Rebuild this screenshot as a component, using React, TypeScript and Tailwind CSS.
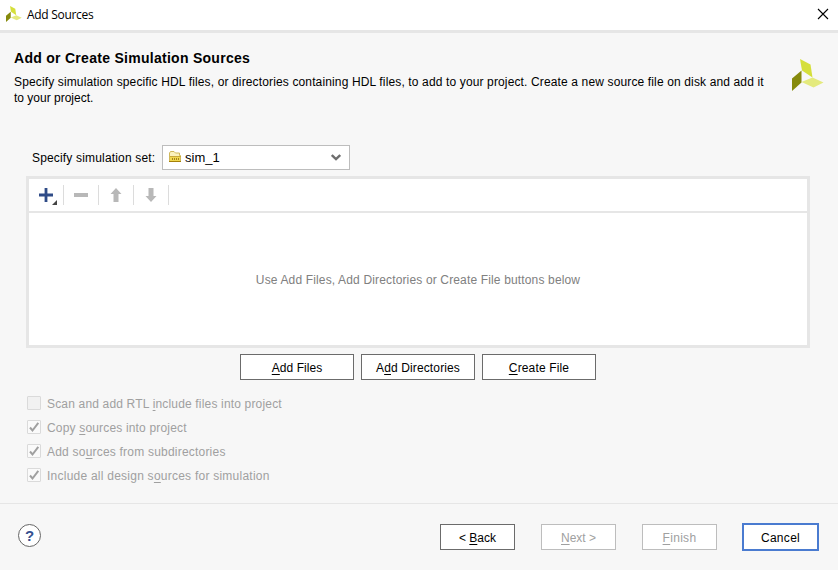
import type { ReactNode } from "react";

function Logo({ className }: { className: string }) {
  return (
    <svg className={className} viewBox="0 0 32 32">
      <path d="M8 0L18.5 5.5L20.5 18.5L10 11.5Z" fill="#d5df3b" />
      <path d="M0 19.5L9.5 11.5V23.5L0 32Z" fill="#868a0c" />
      <path d="M9.5 23L20.5 18.5L31.5 23.5L21.5 28.5Z" fill="#e4ea7d" />
    </svg>
  );
}

function Key({ children }: { children: ReactNode }) {
  return <span className="underline decoration-1 underline-offset-2">{children}</span>;
}

function Button({ className, children }: { className: string; children: ReactNode }) {
  return (
    <button className={`flex items-center justify-center bg-white pt-px whitespace-pre ${className}`}>
      {children}
    </button>
  );
}

function Check({ checked = false, className, children }: { checked?: boolean; className: string; children: ReactNode }) {
  return (
    <div className="flex h-6 items-center gap-[6px]">
      <span className={`h-[14px] w-[14px] rounded-[1px] border border-[#dadada] ${checked ? "bg-[#fafafa]" : "bg-[#f1f1f1]"}`}>
        {checked && (
          <svg className="h-3 w-3" viewBox="0 0 12 12" fill="none">
            <path d="M2 6.5L4.5 9.5L10.3 1.8" stroke="#a0a0a0" strokeWidth="2" />
          </svg>
        )}
      </span>
      <span className={`pt-[2px] whitespace-pre ${className}`}>{children}</span>
    </div>
  );
}

function Tool({ children }: { children: ReactNode }) {
  return (
    <div className="flex h-5 w-[35px] items-center justify-center border-r border-[#dcdcdc]">
      <svg className="h-5 w-[34px]" viewBox="0 0 34 20">{children}</svg>
    </div>
  );
}

export default function App() {
  return (
    <div className="flex h-[570px] w-[838px] flex-col overflow-hidden bg-[#f7f7f7] font-['Liberation_Sans',Arial,sans-serif] text-[12px] leading-4 text-black">
      <header className="flex h-[33px] shrink-0 items-start justify-between border-b-[3px] border-[#e6e6e6] bg-white pl-[6px] pr-[9px]">
        <div className="flex h-[30px] items-center gap-[5px]">
          <Logo className="-mt-[3px] h-4 w-4" />
          <span className="font-['Open_Sans',sans-serif] text-[12px] tracking-[-0.3px]">Add Sources</span>
        </div>
        <svg className="mt-[8px] h-3 w-3" viewBox="0 0 12 12">
          <path d="M1 1L11 11M11 1L1 11" stroke="#000" strokeWidth="1.1" />
        </svg>
      </header>

      <section className="flex h-[112px] shrink-0 items-start justify-between pl-[14px] pr-[14px]">
        <div className="pt-[17px]">
          <h1 className="text-[14px] font-bold leading-4 tracking-[0.28px]">Add or Create Simulation Sources</h1>
          <p className="mt-2 whitespace-pre tracking-[0.137px]">
            Specify simulation specific HDL files, or directories containing HDL files, to add to your project. Create a new source file on disk and add it
            <br />
            <span className="tracking-normal">to your project.</span>
          </p>
        </div>
        <Logo className="mt-[26px] h-8 w-8" />
      </section>

      <div className="flex h-[31px] shrink-0 items-start pl-8">
        <span className="mt-[5px] w-[130px] whitespace-pre tracking-[0.17px]">Specify simulation set:</span>
        <div className="flex h-[25px] w-[188px] items-center border border-[#bdbdbd] bg-white pl-[6px] pr-2">
          <svg className="-mt-[2px] h-3 w-3" viewBox="0 0 12 12">
            <path d="M.5 10.5V2L1.5 .5H5L6.5 2H10.5V4.5H11.5V10.5Z" fill="#fbf2bd" stroke="#cfb85c" />
            <path d="M1 5.5H12" stroke="#c9a93a" />
            <path d="M1 6H11V10H1Z" fill="#f0d850" />
            <path d="M3.5 7V9M5.5 7V9M7.5 7V9M9.5 7V9" stroke="#a5841c" />
            <path d="M0 10.5H12" stroke="#a58008" />
          </svg>
          <span className="ml-1 grow text-[13px]">sim_1</span>
          <svg className="h-[7px] w-[10px]" viewBox="0 0 10 7">
            <path d="M.8 1L5 5L9.2 1" fill="none" stroke="#6e6e6e" strokeWidth="2.4" />
          </svg>
        </div>
      </div>

      <main className="ml-[26px] flex h-[172px] w-[784px] shrink-0 flex-col border-[3px] border-[#e6e6e6] bg-white">
        <div className="flex h-[34px] shrink-0 items-center border-b-2 border-[#e6e6e6]">
          <Tool>
            <path d="M10 10H24M17 3V17" stroke="#2f4b87" strokeWidth="2.8" />
            <path d="M28 15V20H23Z" fill="#444" />
          </Tool>
          <Tool><path d="M10 8H24V12H10Z" fill="#b8b8b8" /></Tool>
          <Tool><path d="M17 3L22.5 9H19.5V17H14.5V9H11.5Z" fill="#b8b8b8" /></Tool>
          <Tool><path d="M17 17L22.5 11H19.5V3H14.5V11H11.5Z" fill="#b8b8b8" /></Tool>
        </div>
        <div className="flex grow items-center justify-center pt-[2px] text-[#808080]">
          <span className="whitespace-pre tracking-[0.15px]">Use Add Files, Add Directories or Create File buttons below</span>
        </div>
      </main>

      <div className="mt-[6px] flex shrink-0 gap-[7px] pl-[240px]">
        <Button className="h-[26px] w-[114px] border border-[#6b6b6b] tracking-[0.05px]"><Key>A</Key>dd Files</Button>
        <Button className="h-[26px] w-[114px] border border-[#6b6b6b] tracking-[0.13px]">A<Key>d</Key>d Directories</Button>
        <Button className="h-[26px] w-[114px] border border-[#6b6b6b] tracking-[0.15px]"><Key>C</Key>reate File</Button>
      </div>

      <div className="mt-[11px] h-[112px] shrink-0 pl-[27px] text-[#a0a0a0]">
        <Check className="tracking-[0.17px]">Scan and add RTL <Key>i</Key>nclude files into project</Check>
        <Check checked className="tracking-[0.17px]">Copy <Key>s</Key>ources into project</Check>
        <Check checked className="tracking-[0.21px]">Add so<Key>u</Key>rces from subdirectories</Check>
        <Check checked className="tracking-[0.24px]">Include all design s<Key>o</Key>urces for simulation</Check>
      </div>

      <footer className="flex grow items-start justify-between border-t border-[#e6e6e6] pl-[18px] pr-[19px] pt-[19px]">
        <button className="mt-px flex h-[23px] w-[23px] items-center justify-center rounded-full border border-[#666] bg-white text-[15px] font-bold text-[#34508f]">?</button>
        <div className="flex items-center">
          <Button className="mr-[26px] h-[26px] w-[75px] border border-[#6b6b6b]">{"< "}<Key>B</Key>ack</Button>
          <Button className="mr-[26px] h-[26px] w-[75px] border border-[#bdbdbd] text-[#a0a0a0]"><Key>N</Key>ext &gt;</Button>
          <Button className="mr-[25px] h-[26px] w-[75px] border border-[#bdbdbd] tracking-[0.3px] text-[#a0a0a0]"><Key>F</Key>inish</Button>
          <Button className="h-7 w-[77px] border-2 border-[#4a7bd0] tracking-[0.3px]">Cancel</Button>
        </div>
      </footer>
    </div>
  );
}
